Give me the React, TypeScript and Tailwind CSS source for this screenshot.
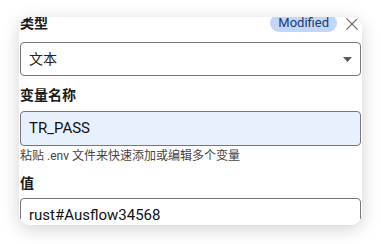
const font = { fontFamily: '"Roboto", "Noto Sans CJK SC", sans-serif' };

const App = () => {
    return (
        <div className="h-[244px] w-[381px] overflow-hidden bg-white" style={font}>
            <div className="ml-[19px] mt-[17px] h-[208px] w-[343px] overflow-hidden rounded-xl bg-white shadow-[0_4px_18px_rgba(0,0,0,0.18)]">
                <div className="-mt-[3px] flex flex-col px-px">
                    <div className="flex h-[18px] items-center">
                        <span className="text-[14px] font-bold leading-[18px] text-[#1b1b1b]">类型</span>
                        <span className="ml-auto flex h-[18px] items-center rounded-full bg-[#c2d7f8] px-2 text-[13px] text-[#1f3a6b]">
                            Modified
                        </span>
                        <svg className="ml-[9px] mr-[3px] mt-[2px]" width="12" height="12" viewBox="0 0 12 12">
                            <path d="M0.5 0.5 L11.5 11.5 M11.5 0.5 L0.5 11.5" stroke="#707070" strokeWidth="1.1" fill="none" />
                        </svg>
                    </div>

                    <div className="mt-[10px] flex h-[34px] items-center rounded-[4px] border border-[#767676] bg-white pl-2 pr-[8px]">
                        <span className="text-[14px] text-[#222]">文本</span>
                        <svg className="ml-auto mt-px" width="9" height="5" viewBox="0 0 9 5">
                            <path d="M0 0 L9 0 L4.5 5 Z" fill="#5a5a5a" />
                        </svg>
                    </div>

                    <span className="mt-[10px] text-[14px] font-bold leading-[18px] text-[#1b1b1b]">变量名称</span>

                    <div className="mt-[7px] flex h-[35px] items-center rounded-[4px] border border-[#767676] bg-[#e8f0fe] pl-2">
                        <span className="text-[15px] text-[#111]">TR_PASS</span>
                    </div>

                    <span className="mt-[2px] text-[12px] leading-[16px] text-[#444]">粘贴 .env 文件来快速添加或编辑多个变量</span>

                    <span className="mt-[10px] text-[14px] font-bold leading-[18px] text-[#1b1b1b]">值</span>

                    <div className="mt-[6px] flex h-[35px] items-center rounded-[4px] border border-[#767676] bg-white pl-2">
                        <span className="text-[15px] text-[#111]">rust#Ausflow34568</span>
                    </div>
                </div>
            </div>
        </div>
    );
};

export default App;
